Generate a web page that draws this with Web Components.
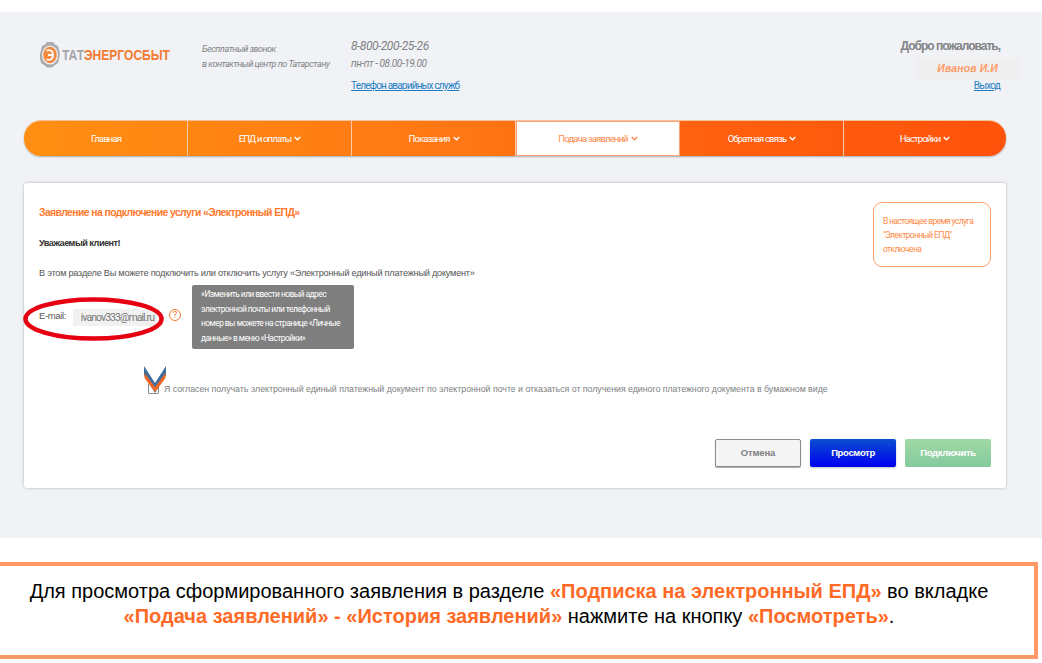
<!DOCTYPE html>
<html lang="ru">
<head>
<meta charset="utf-8">
<title>Подача заявлений</title>
<style>
    html, body { margin: 0; background: #fff; }
    body { font-family: Roboto, "Liberation Sans", sans-serif; }
</style>
</head>
<body>
<app-page>
    <site-header></site-header>
    <main-nav>
        <nav-item>Главная</nav-item>
        <nav-item arrow>ЕПД и оплаты</nav-item>
        <nav-item arrow>Показания</nav-item>
        <nav-item arrow active>Подача заявлений</nav-item>
        <nav-item arrow>Обратная связь</nav-item>
        <nav-item arrow>Настройки</nav-item>
    </main-nav>
    <epd-card></epd-card>
</app-page>
<hint-note>
    Для просмотра сформированного заявления в разделе <b>«Подписка на электронный ЕПД»</b> во вкладке<br>
    <b>«Подача заявлений» - «История заявлений»</b> нажмите на кнопку <b>«Посмотреть»</b>.
</hint-note>

<script>
class AppPage extends HTMLElement {
    constructor() {
        super();
        this.attachShadow({ mode: 'open' });
        this.shadowRoot.innerHTML = `
            <style>
                :host {
                    display: block;
                    margin-top: 12px;
                    height: 526px;
                    padding: 0 36px 0 24px;
                    box-sizing: border-box;
                    background: #f1f2f5;
                }
            </style>
            <slot></slot>
        `;
    }
}

class SiteHeader extends HTMLElement {
    constructor() {
        super();
        this.attachShadow({ mode: 'open' });
        this.shadowRoot.innerHTML = `
            <style>
                :host {
                    display: flex;
                    height: 109px;
                    padding: 26px 6px 0 16px;
                    box-sizing: border-box;
                    color: #808285;
                }
                a { color: #1f7fc4; text-decoration: underline; }
                .logo { display: flex; align-items: center; gap: 2px; width: 162px; height: 34px; }
                .logo span {
                    font: 700 14.5px "Liberation Sans", sans-serif;
                    white-space: nowrap;
                    color: #a3a5a8;
                    transform: scaleX(.83);
                    transform-origin: left center;
                }
                .logo b { font-weight: 700; color: #f47b30; }
                .free { width: 149px; padding-top: 4px; font: italic 9px/14.5px Roboto, sans-serif; letter-spacing: -0.48px; }
                .phone { flex: 1; }
                .num { font: italic 12px/16px Roboto, sans-serif; letter-spacing: -0.47px; }
                .hours { font: italic 10px/20px Roboto, sans-serif; letter-spacing: -0.4px; }
                .phone a { display: block; margin-top: 5px; font-size: 10px; line-height: 14px; letter-spacing: -0.8px; }
                .user { display: flex; flex-direction: column; align-items: flex-end; }
                .hello { font: 700 12px/16px "Liberation Sans", sans-serif; letter-spacing: -1px; margin-bottom: 4px; }
                .name {
                    width: 103px;
                    height: 22px;
                    margin-right: -19px;
                    padding-right: 21px;
                    box-sizing: border-box;
                    text-align: right;
                    background: #f0efef;
                    color: #ff9a66;
                    font: italic 700 10.5px/21px "Liberation Sans", sans-serif;
                    letter-spacing: 0.1px;
                }
                .user a { margin-top: -1px; font-size: 10px; line-height: 14px; letter-spacing: -0.8px; }
            </style>
            <div class="logo">
                <svg width="20" height="26" viewBox="0 0 20 26">
                    <path d="M7 0h6l2 2.500 3 1.500 1 4 1 4-1 5-1 4-3 2-3 2.500H7l-3-2.500-3-2-1-4L0 12l1-4 1-4 3-1.500z" fill="#a9abae"/>
                    <ellipse cx="10" cy="13" rx="8" ry="9.600" fill="#f3f3f3"/>
                    <ellipse cx="10" cy="13" rx="6.800" ry="8.300" fill="#f4883f"/>
                    <path d="M6.500 8.800c2.500-1.300 6.500-.8 6.500 4.200s-4 5.500-6.500 4.200M8 13h4.800" fill="none" stroke="#fff" stroke-width="1.800"/>
                </svg>
                <span>ТАТ<b>ЭНЕРГОСБЫТ</b></span>
            </div>
            <div class="free">Бесплатный звонок<br>в контактный центр по Татарстану</div>
            <div class="phone">
                <div class="num">8-800-200-25-26</div>
                <div class="hours">пн-пт - 08.00-19.00</div>
                <a href="#">Телефон аварийных служб</a>
            </div>
            <div class="user">
                <div class="hello">Добро пожаловать,</div>
                <div class="name">Иванов И.И</div>
                <a href="#">Выход</a>
            </div>
        `;
    }
}

class MainNav extends HTMLElement {
    constructor() {
        super();
        this.attachShadow({ mode: 'open' });
        this.shadowRoot.innerHTML = `
            <style>
                :host {
                    display: grid;
                    grid-template-columns: repeat(5, 164px) 1fr;
                    height: 35px;
                    border-radius: 17px;
                    overflow: hidden;
                    background: linear-gradient(90deg, #ff8f12, #ff7614 45%, #ff600e 70%, #ff520b);
                    box-shadow: 0 1px 2px rgba(0,0,0,.28), 0 -1px 0 #f7c3a0;
                }
            </style>
            <slot></slot>
        `;
    }
}

class NavItem extends HTMLElement {
    constructor() {
        super();
        this.attachShadow({ mode: 'open' });
        this.shadowRoot.innerHTML = `
            <style>
                :host {
                    display: flex;
                    align-items: center;
                    justify-content: center;
                    gap: 3px;
                    color: #fff;
                    font: 9.5px Roboto, sans-serif;
                    letter-spacing: -0.85px;
                    box-shadow: inset -1px 0 0 #f8c9a8;
                }
                :host(:last-child) { box-shadow: none; }
                :host([active]) {
                    background: #fff;
                    color: #ff8a4d;
                    box-shadow: inset 0 0 0 1px #f8a376;
                }
                svg { display: none; }
                :host([arrow]) svg { display: block; }
            </style>
            <slot></slot>
            <svg width="7" height="5" viewBox="0 0 7 5"><path d="M.7.9l2.800 2.800L6.300.9" fill="none" stroke="currentColor" stroke-width="1.400"/></svg>
        `;
    }
}

class EpdCard extends HTMLElement {
    constructor() {
        super();
        this.attachShadow({ mode: 'open' });
        this.shadowRoot.innerHTML = `
            <style>
                :host {
                    display: block;
                    position: relative;
                    margin-top: 27px;
                    height: 305px;
                    padding: 20px 15px 0;
                    box-sizing: border-box;
                    background: #fff;
                    border-radius: 3px;
                    box-shadow: 0 0 3px rgba(0,0,0,.28);
                    color: #555;
                    font-size: 9.5px;
                }
                .top { display: flex; justify-content: space-between; height: 237px; }
                h1 { margin: 3px 0 0; height: 14px; font: 700 10.4px/14px "Liberation Sans", sans-serif; color: #ff7a2e; letter-spacing: -0.59px; }
                .hi { margin-top: 16px; height: 14px; font: 700 9.2px/14px "Liberation Sans", sans-serif; color: #333; letter-spacing: -0.52px; }
                .intro { margin-top: 16px; height: 14px; font: 9.2px/14px "Liberation Sans", sans-serif; letter-spacing: -0.25px; white-space: nowrap; }
                .mail { display: flex; align-items: center; height: 64px; margin-top: 5px; }
                .mail label { width: 34px; margin-top: -4px; font: 9.5px "Liberation Sans", sans-serif; letter-spacing: -0.35px; }
                .mail output {
                    width: 84px;
                    height: 17px;
                    box-sizing: border-box;
                    padding-right: 3px;
                    text-align: right;
                    background: #f1f1f1;
                    color: #777;
                    font: 10.5px/18px Roboto, sans-serif;
                    letter-spacing: -0.95px;
                }
                .q {
                    width: 12px;
                    height: 12px;
                    margin: -4px 11px 0 12px;
                    box-sizing: border-box;
                    border: 1px solid #f47b30;
                    border-radius: 50%;
                    color: #f47b30;
                    font: 9.5px/10px Roboto, sans-serif;
                    text-align: center;
                }
                .tip {
                    width: 162px;
                    height: 64px;
                    padding: 2px 8px 0 9px;
                    box-sizing: border-box;
                    background: #7f7f7f;
                    border-radius: 2px;
                    color: #fff;
                    font: 8.4px/14.6px Roboto, sans-serif;
                    letter-spacing: -0.53px;
                }
                .agree { display: flex; align-items: center; gap: 5px; margin: 34px 0 0 109px; white-space: nowrap; color: #7d7f82; font: 8.8px "Liberation Sans", sans-serif; letter-spacing: -0.02px; }
                .box { width: 9px; height: 9px; border: 1px solid #8a8c8f; border-radius: 1px; background: #fff; }
                .note {
                    width: 118px;
                    height: 65px;
                    margin-top: -1px;
                    padding: 11px 8px 0 9px;
                    box-sizing: border-box;
                    border: 1px solid #ffa26b;
                    border-radius: 9px;
                    color: #ff8a47;
                    font: 8.6px/14px Roboto, sans-serif;
                    letter-spacing: -0.7px;
                }
                .btns { display: flex; justify-content: flex-end; gap: 9px; margin-top: -1px; }
                .btn {
                    width: 86px;
                    height: 28px;
                    box-sizing: border-box;
                    border-radius: 2px;
                    font: 700 9.5px/28px "Liberation Sans", sans-serif;
                    letter-spacing: -0.35px;
                    text-align: center;
                    color: #fff;
                }
                .cancel { border: 1px solid #8c8c8c; background: #f4f4f4; color: #808285; line-height: 26px; box-shadow: 0 1px 1px rgba(0,0,0,.35); letter-spacing: -0.15px; }
                .view { background: linear-gradient(#0a4fd0, #0000f0); box-shadow: 0 1px 2px rgba(0,0,0,.25); }
                .connect { background: linear-gradient(#a0d9a2, #85c9a0); }
                .ring { position: absolute; left: -1px; top: 112px; }
                .mark { position: absolute; left: 119px; top: 182px; }
            </style>
            <div class="top">
                <div>
                    <h1>Заявление на подключение услуги «Электронный ЕПД»</h1>
                    <div class="hi">Уважаемый клиент!</div>
                    <div class="intro">В этом разделе Вы можете подключить или отключить услугу «Электронный единый платежный документ»</div>
                    <div class="mail">
                        <label>E-mail:</label>
                        <output>ivanov333@mail.ru</output>
                        <span class="q">?</span>
                        <div class="tip">«Изменить или ввести новый адрес электронной почты или телефонный номер вы можете на странице «Личные данные» в меню «Настройки»</div>
                    </div>
                    <div class="agree"><span class="box"></span>Я согласен получать электронный единый платежный документ по электронной почте и отказаться от получения единого платежного документа в бумажном виде</div>
                </div>
                <div class="note">В настоящее время услуга<br>"Электронный ЕПД"<br>отключена</div>
            </div>
            <div class="btns">
                <div class="btn cancel">Отмена</div>
                <div class="btn view">Просмотр</div>
                <div class="btn connect">Подключить</div>
            </div>
            <svg class="ring" width="142" height="48" viewBox="0 0 142 48">
                <ellipse cx="70.5" cy="24" rx="68" ry="19.5" fill="none" stroke="#e60012" stroke-width="4.5"/>
            </svg>
            <svg class="mark" width="24" height="32" viewBox="0 0 24 32">
                <path d="M1 1l11 17L23 1v9L12 28 1 10z" fill="#3d6f9f"/>
                <path d="M1.500 8l10.500 14L22.500 8v5L12 27 1.500 13z" fill="#f26522"/>
            </svg>
        `;
    }
}

class HintNote extends HTMLElement {
    constructor() {
        super();
        this.attachShadow({ mode: 'open' });
        this.shadowRoot.innerHTML = `
            <style>
                :host {
                    display: block;
                    margin: 24px 4px 0 -4px;
                    height: 97px;
                    padding: 13px 16px 0 0;
                    box-sizing: border-box;
                    border: 4px solid #ff9966;
                    text-align: center;
                    color: #000;
                    font: 20px/24.5px "Liberation Sans", sans-serif;
                }
                ::slotted(b) { color: #ff6a26; }
            </style>
            <slot></slot>
        `;
    }
}

customElements.define('app-page', AppPage);
customElements.define('site-header', SiteHeader);
customElements.define('main-nav', MainNav);
customElements.define('nav-item', NavItem);
customElements.define('epd-card', EpdCard);
customElements.define('hint-note', HintNote);
</script>
</body>
</html>
